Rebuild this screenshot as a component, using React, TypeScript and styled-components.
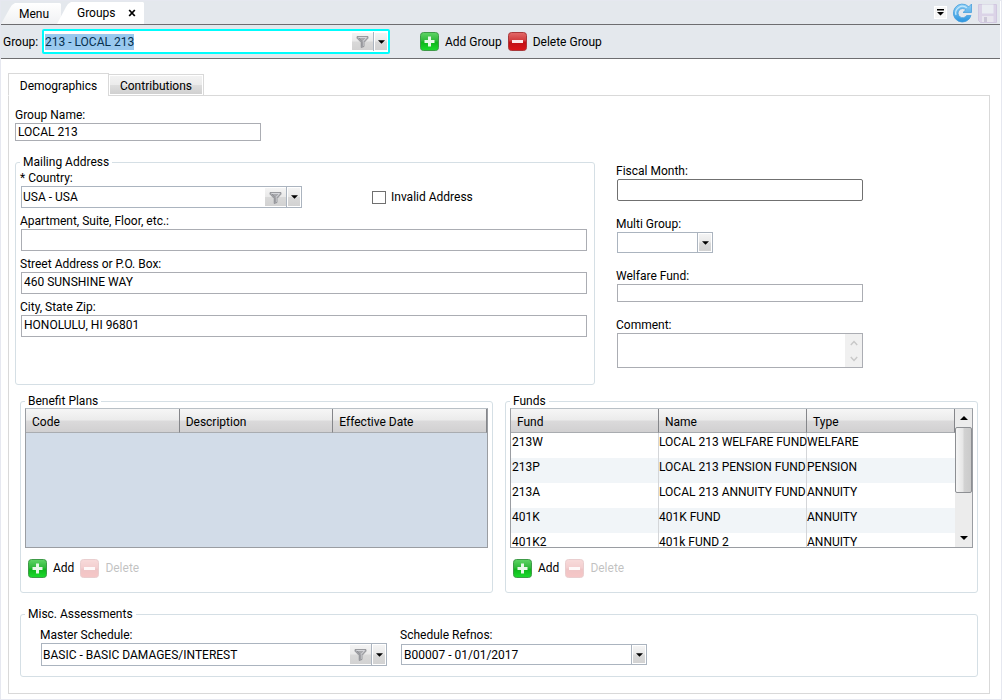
import React, { useEffect, useRef } from "react";
import styled, { createGlobalStyle, css } from "styled-components";

const GlobalStyle = createGlobalStyle`
  * { box-sizing: border-box; }
  body { margin: 0; background: #fff; }
  body, button, input, select, textarea, table {
    font-family: Roboto, "Open Sans", sans-serif;
    font-size: 12px;
    line-height: 16px;
    color: #000;
  }
  button { padding: 0; border: 0; background: none; }
`;

const face = "linear-gradient(#f4f4f4 0%, #e9e9e9 48%, #d9d9d9 52%, #d2d2d2 100%)";

const Window = styled.div`
  min-height: 100vh;
  display: flex;
  flex-direction: column;
  border: 1px solid #e6e8f0;
  padding-right: 1px;
`;

const TitleBar = styled.header`
  display: flex;
  justify-content: space-between;
  height: 24px;
  background: #e4e8ed;
  border-bottom: 1px solid #6d6d70;
`;

const DocTabs = styled.nav`
  display: flex;
  align-items: flex-end;
`;

const DocTab = styled.button<{ $active?: boolean }>`
  display: flex;
  align-items: center;
  justify-content: space-between;
  width: ${(p) => (p.$active ? 87 : 60)}px;
  height: ${(p) => (p.$active ? 22 : 21)}px;
  padding: ${(p) => (p.$active ? "0 8px 0 20px" : "0 11px 0 18px")};
  margin-left: ${(p) => (p.$active ? -4 : 0)}px;
  background: ${(p) => (p.$active ? "#fff" : "linear-gradient(#fff, #f0f1f3)")};
  clip-path: polygon(0 100%, 9px 5px, 11px 2px, 14px 0, calc(100% - 1px) 0, 100% 1px, 100% 100%);
`;

const WindowTools = styled.div`
  display: flex;
  align-items: center;
  gap: 6px;
  padding-right: 3px;
`;

const TabListButton = styled.button`
  display: flex;
  align-items: center;
  justify-content: center;
  width: 13px;
  height: 13px;
  background: #f6f6f6;
  border: 1px solid #fff;
`;

const ToolButton = styled.button`
  display: flex;
  width: 19px;
  height: 20px;
  &:disabled { opacity: 0.8; }
`;

const Toolbar = styled.div`
  display: flex;
  align-items: center;
  height: 34px;
  padding-left: 2px;
  background: #e4e8ed;
  border-bottom: 1px solid #6d6d70;
`;

const ToolbarLabel = styled.label`
  width: 39px;
`;

const ToolbarActions = styled.div`
  display: flex;
  gap: 6px;
  margin-left: 30px;
`;

const IconButton = styled.button`
  display: flex;
  align-items: center;
  gap: 6px;
  height: 20px;
  white-space: nowrap;
  &:disabled { color: #000; opacity: 0.24; }
  svg { flex: none; }
`;

const ComboBox = styled.div<{ $width: number; $height?: number; $focus?: boolean }>`
  display: flex;
  width: ${(p) => p.$width}px;
  max-width: 100%;
  height: ${(p) => p.$height ?? 22}px;
  background: #fff;
  border: 1px solid #abb4bf;
  ${(p) =>
    p.$focus &&
    css`
      border: 2px solid #00fdfd;
      border-radius: 2px;
      padding: 1px 0;
    `}
`;

const ComboText = styled.input`
  flex: 1;
  min-width: 0;
  padding: 0 0 0 1px;
  border: 0;
  outline: 0;
  background: transparent;
  &::selection { background: #99c9ef; color: #06304f; }
`;

const FilterButton = styled.button`
  display: flex;
  align-items: center;
  justify-content: center;
  width: 21px;
  margin: 1px 0;
  background: ${face};
`;

const DropButton = styled.button`
  display: flex;
  align-items: center;
  justify-content: center;
  width: 14px;
  border: 1px solid #fff;
  background: ${face};
  background-clip: padding-box;
  box-shadow: -1px 0 0 #abb4bf;
  margin-left: 1px;
`;

const SelectFrame = styled.div<{ $width: number }>`
  display: flex;
  width: ${(p) => p.$width}px;
  max-width: 100%;
  height: 21px;
  border: 1px solid #abb4bf;
  background: #fff;
  position: relative;
`;

const SelectArrow = styled.span`
  position: absolute;
  top: 0;
  right: 0;
  bottom: 0;
  width: 14px;
  display: flex;
  align-items: center;
  justify-content: center;
  border: 1px solid #fff;
  background: ${face};
  background-clip: padding-box;
  box-shadow: -1px 0 0 #abb4bf;
  pointer-events: none;
`;

const Select = styled.select`
  appearance: none;
  flex: 1;
  min-width: 0;
  padding: 0 18px 0 2px;
  border: 0;
  background: transparent;
`;

const TextBox = styled.input<{ $tall?: boolean; $rounded?: boolean }>`
  width: 100%;
  height: ${(p) => (p.$tall ? 22 : 18)}px;
  padding: ${(p) => (p.$tall ? "0 2px 2px" : "0 2px")};
  background: #fff;
  border: 1px solid ${(p) => (p.$rounded ? "#707070" : "#abadb3")};
  border-radius: ${(p) => (p.$rounded ? 2 : 0)}px;
`;

const Content = styled.main`
  flex: 1;
  display: flex;
  flex-direction: column;
  padding: 14px 10px 5px 7px;
`;

const PageTabs = styled.div`
  display: flex;
  align-items: flex-end;
  height: 23px;
  margin-bottom: -1px;
`;

const PageTab = styled.button<{ $active?: boolean }>`
  position: relative;
  padding-top: 2px;
  border: 1px solid #d9d9d9;
  white-space: nowrap;
  ${(p) =>
    p.$active
      ? css`
          width: 101px;
          height: 23px;
          background: #fff;
          border-bottom-color: #fff;
        `
      : css`
          width: 96px;
          height: 22px;
          margin-left: -1px;
          background: linear-gradient(#f3f3f3, #ebebeb 50%, #dddddd 52%, #cfcfcf);
          box-shadow: inset 0 0 0 1px #fff;
        `}
`;

const TabPanel = styled.section`
  flex: 1;
  border: 1px solid #d9d9d9;
  padding: 11px 11px 15px 6px;
`;

const TopGrid = styled.div`
  display: grid;
  grid-template-columns: minmax(0, 580fr) minmax(0, 362fr);
  gap: 21px;
`;

const Column = styled.div`
  display: flex;
  flex-direction: column;
  gap: 14px;
`;

const SideFields = styled.div`
  display: flex;
  flex-direction: column;
  gap: 15px;
  margin-top: 56px;
  width: 247px;
  max-width: 100%;
`;

const Field = styled.div`
  display: flex;
  flex-direction: column;
  > :not(label) { margin-left: 1px; }
  > input, > textarea { width: calc(100% - 1px); }
`;

const NameField = styled.div`
  display: flex;
  flex-direction: column;
  width: 246px;
`;

const FieldLabel = styled.label`
  height: 16px;
  white-space: nowrap;
`;

const GroupBox = styled.fieldset<{ $pad: string }>`
  min-width: 0;
  margin: 0;
  padding: ${(p) => p.$pad};
  border: 1px solid #d5dfe5;
  border-radius: 3px;
`;

const Legend = styled.legend`
  padding: 0 3px;
  line-height: 14px;
`;

const AddressFields = styled.div`
  display: flex;
  flex-direction: column;
  gap: 5px;
`;

const CountryRow = styled.div`
  display: flex;
  align-items: center;
  gap: 70px;
`;

const CheckLabel = styled.label`
  display: flex;
  align-items: center;
  gap: 5px;
  white-space: nowrap;
`;

const CheckBox = styled.input`
  appearance: none;
  width: 14px;
  height: 13px;
  margin: 0;
  border: 1px solid #707070;
  background: #fff;
  &:checked { background: #4a6f94; }
`;

const CommentFrame = styled.div`
  display: flex;
  height: 35px;
  border: 1px solid #abadb3;
`;

const CommentText = styled.textarea`
  flex: 1;
  min-width: 0;
  padding: 0 2px;
  border: 0;
  resize: none;
  overflow: hidden;
`;

const CommentScroll = styled.div`
  width: 17px;
  display: flex;
  flex-direction: column;
  align-items: center;
  justify-content: space-between;
  padding: 6px 0 5px;
  background: #f0f0f0;
`;

const PairGrid = styled.div`
  display: grid;
  grid-template-columns: repeat(2, minmax(0, 1fr));
  gap: 12px;
  margin: 9px 0 0 5px;
`;

const GridFrame = styled.div<{ $empty?: boolean }>`
  display: flex;
  height: 140px;
  overflow: hidden;
  border: 1px solid #9a9da2;
  border-top-color: #b9c0c6;
  background: ${(p) => (p.$empty ? "#d2dce8" : "#fff")};
`;

const GridBody = styled.div`
  flex: 1;
  min-width: 0;
`;

const DataTable = styled.table`
  width: 100%;
  table-layout: fixed;
  border-collapse: separate;
  border-spacing: 0;
  th {
    height: 24px;
    padding: 2px 0 0 6px;
    text-align: left;
    font-weight: 400;
    background: linear-gradient(#f6f6f6 0%, #ebebeb 48%, #dbdadb 52%, #d1d0d1 100%);
    border-right: 1px solid #85868a;
    border-bottom: 1px solid #a9acb0;
  }
  td {
    height: 25px;
    padding: 1px 0 0;
    vertical-align: top;
    white-space: nowrap;
    border-right: 1px solid #d4d6d9;
  }
  td:first-child { padding-left: 1px; }
  td:last-child { border-right: 0; }
  tbody tr:nth-child(even) { background: #f1f5f8; }
`;

const ScrollTrack = styled.div`
  display: flex;
  flex-direction: column;
  width: 17px;
  background: #ececec;
`;

const ScrollArrow = styled.button`
  display: flex;
  align-items: center;
  justify-content: center;
  height: 18px;
`;

const ScrollThumb = styled.div`
  height: 66px;
  border: 1px solid #8d8f93;
  border-radius: 2px;
  background: linear-gradient(90deg, #f5f5f5, #e6e6e6 45%, #d2d2d2 55%, #cacaca);
`;

const ScrollSpace = styled.div`
  flex: 1;
`;

const GridActions = styled.div`
  display: flex;
  gap: 6px;
  padding: 10px 0 0 3px;
`;

const MiscSection = styled.div`
  margin: 14px 0 0 5px;
`;

const MiscRow = styled.div`
  display: flex;
  gap: 13px;
  padding-left: 15px;
`;

const RefnoField = styled(Field)`
  ${SelectFrame} { margin-top: 1px; }
`;

const Triangle = ({ up, wide }: { up?: boolean; wide?: boolean }) => (
  <svg width={wide ? 8 : 7} height="4" viewBox="0 0 8 4" aria-hidden="true">
    <path d={up ? "M0 4L4 0L8 4Z" : "M0 0H8L4 4Z"} fill="#000" />
  </svg>
);

const Funnel = () => (
  <svg width="13" height="13" viewBox="0 0 13 13" aria-hidden="true">
    <path d="M1 1.5H12V3.2L8 7.5V11.5L5.2 12.5V7.5L1 3.2Z" fill="#a9aaae" stroke="#8c8d92" strokeWidth="0.8" />
    <path d="M2.4 2.5H10.6L7 6.4V11" fill="none" stroke="#d6d7db" strokeWidth="1" />
    <path d="M3 3L6.2 6.8V11" fill="none" stroke="#85868c" strokeWidth="0.8" />
  </svg>
);

const Plus = () => (
  <svg width="19" height="19" viewBox="0 0 19 19" aria-hidden="true">
    <defs>
      <linearGradient id="plusFace" x1="0" y1="0" x2="0" y2="1">
        <stop offset="0" stopColor="#5fd566" />
        <stop offset="0.45" stopColor="#2fb83a" />
        <stop offset="0.55" stopColor="#0fb61c" />
        <stop offset="1" stopColor="#1bdc2c" />
      </linearGradient>
    </defs>
    <rect x="0.5" y="0.5" width="18" height="18" rx="3" fill="url(#plusFace)" stroke="#3f9a48" />
    <path d="M9.5 4.5V14.5M4.5 9.5H14.5" stroke="#e9f8ea" strokeWidth="3" />
  </svg>
);

const Minus = () => (
  <svg width="19" height="19" viewBox="0 0 19 19" aria-hidden="true">
    <defs>
      <linearGradient id="minusFace" x1="0" y1="0" x2="0" y2="1">
        <stop offset="0" stopColor="#e46a6a" />
        <stop offset="0.45" stopColor="#cf3a3c" />
        <stop offset="0.55" stopColor="#c01216" />
        <stop offset="1" stopColor="#dc1518" />
      </linearGradient>
    </defs>
    <rect x="0.5" y="0.5" width="18" height="18" rx="3" fill="url(#minusFace)" stroke="#a8383b" />
    <path d="M4 9.5H15" stroke="#fbeaea" strokeWidth="3" />
  </svg>
);

const Refresh = () => (
  <svg width="19" height="20" viewBox="0 0 19 20" aria-hidden="true">
    <defs>
      <linearGradient id="refreshFace" x1="0" y1="0" x2="0" y2="1">
        <stop offset="0" stopColor="#8fd0f6" />
        <stop offset="1" stopColor="#2b95e0" />
      </linearGradient>
    </defs>
    <path
      d="M18.5 1V9.5H10L12.8 6.8A4.6 4.6 0 1 0 13.6 12.5H18A9 9 0 1 1 15.8 3.8Z"
      fill="url(#refreshFace)"
      stroke="#4a9fdc"
      strokeWidth="0.8"
      strokeLinejoin="round"
    />
    <path d="M3 12A6.8 6.8 0 0 1 13.8 4.8" fill="none" stroke="#c5e8fb" strokeWidth="1.2" />
  </svg>
);

const Save = () => (
  <svg width="19" height="20" viewBox="0 0 19 20" aria-hidden="true">
    <path d="M0.5 1.5H18.5V19.5H2.5L0.5 17.5Z" fill="#d9cfe6" stroke="#cdc1dd" />
    <rect x="4" y="1.5" width="11.5" height="9" fill="#eceff4" />
    <rect x="4" y="13" width="11.5" height="6" fill="#e9e6ef" />
    <rect x="6" y="14" width="3" height="5" fill="#c6c0d2" />
  </svg>
);

const Chevron = ({ up }: { up?: boolean }) => (
  <svg width="8" height="6" viewBox="0 0 8 6" aria-hidden="true">
    <path d={up ? "M0.8 5L4 1.5L7.2 5" : "M0.8 1L4 4.5L7.2 1"} fill="none" stroke="#c8c8c8" strokeWidth="1.4" />
  </svg>
);

interface FilterComboProps {
  id: string;
  value: string;
  width: number;
  height?: number;
  focus?: boolean;
}

function FilterCombo({ id, value, width, height, focus }: FilterComboProps) {
  const ref = useRef<HTMLInputElement>(null);
  useEffect(() => {
    if (focus && ref.current) {
      ref.current.focus();
      ref.current.select();
    }
  }, [focus]);
  return (
    <ComboBox $width={width} $height={height} $focus={focus}>
      <ComboText ref={ref} id={id} role="combobox" aria-expanded="false" defaultValue={value} />
      <FilterButton type="button" aria-label="Filter">
        <Funnel />
      </FilterButton>
      <DropButton type="button" aria-label="Open list">
        <Triangle />
      </DropButton>
    </ComboBox>
  );
}

function DropDown({ id, value, width }: { id: string; value: string; width: number }) {
  return (
    <SelectFrame $width={width}>
      <Select id={id} defaultValue={value}>
        <option value={value}>{value}</option>
      </Select>
      <SelectArrow>
        <Triangle />
      </SelectArrow>
    </SelectFrame>
  );
}

function RowActions() {
  return (
    <GridActions>
      <IconButton type="button">
        <Plus />
        Add
      </IconButton>
      <IconButton type="button" disabled>
        <Minus />
        Delete
      </IconButton>
    </GridActions>
  );
}

const funds = [
  ["213W", "LOCAL 213 WELFARE FUND", "WELFARE"],
  ["213P", "LOCAL 213 PENSION FUND", "PENSION"],
  ["213A", "LOCAL 213 ANNUITY FUND", "ANNUITY"],
  ["401K", "401K FUND", "ANNUITY"],
  ["401K2", "401k FUND 2", "ANNUITY"],
];

function HeaderRow({ names }: { names: string[] }) {
  return (
    <thead>
      <tr>
        {names.map((name) => (
          <th key={name} scope="col">
            {name}
          </th>
        ))}
      </tr>
    </thead>
  );
}

export default function App() {
  return (
    <Window>
      <GlobalStyle />
      <TitleBar>
        <DocTabs>
          <DocTab type="button">Menu</DocTab>
          <DocTab type="button" $active>
            Groups
            <svg width="8" height="8" viewBox="0 0 8 8" aria-hidden="true">
              <path d="M1.2 1L6.8 7M6.8 1L1.2 7" stroke="#000" strokeWidth="1.8" />
            </svg>
          </DocTab>
        </DocTabs>
        <WindowTools>
          <TabListButton type="button" aria-label="Open tabs">
            <svg width="7" height="7" viewBox="0 0 7 7" aria-hidden="true">
              <path d="M0 0H7V1.4H0ZM0 3H7L3.5 6.5Z" fill="#000" />
            </svg>
          </TabListButton>
          <ToolButton type="button" aria-label="Refresh">
            <Refresh />
          </ToolButton>
          <ToolButton type="button" aria-label="Save" disabled>
            <Save />
          </ToolButton>
        </WindowTools>
      </TitleBar>

      <Toolbar>
        <ToolbarLabel htmlFor="group">Group:</ToolbarLabel>
        <FilterCombo id="group" value="213 - LOCAL 213" width={348} height={25} focus />
        <ToolbarActions>
          <IconButton type="button">
            <Plus />
            Add Group
          </IconButton>
          <IconButton type="button">
            <Minus />
            Delete Group
          </IconButton>
        </ToolbarActions>
      </Toolbar>

      <Content>
        <PageTabs role="tablist">
          <PageTab type="button" role="tab" aria-selected="true" $active>
            Demographics
          </PageTab>
          <PageTab type="button" role="tab" aria-selected="false">
            Contributions
          </PageTab>
        </PageTabs>
        <TabPanel role="tabpanel">
          <TopGrid>
            <Column>
              <NameField>
                <FieldLabel htmlFor="name">Group Name:</FieldLabel>
                <TextBox id="name" defaultValue="LOCAL 213" />
              </NameField>
              <GroupBox $pad="1px 7px 47px 4px">
                <Legend>Mailing Address</Legend>
                <AddressFields>
                  <Field>
                    <FieldLabel htmlFor="country">* Country:</FieldLabel>
                    <CountryRow>
                      <FilterCombo id="country" value="USA - USA" width={281} />
                      <CheckLabel>
                        <CheckBox type="checkbox" />
                        Invalid Address
                      </CheckLabel>
                    </CountryRow>
                  </Field>
                  <Field>
                    <FieldLabel htmlFor="apt">Apartment, Suite, Floor, etc.:</FieldLabel>
                    <TextBox id="apt" $tall />
                  </Field>
                  <Field>
                    <FieldLabel htmlFor="street">Street Address or P.O. Box:</FieldLabel>
                    <TextBox id="street" $tall defaultValue="460 SUNSHINE WAY" />
                  </Field>
                  <Field>
                    <FieldLabel htmlFor="city">City, State Zip:</FieldLabel>
                    <TextBox id="city" $tall defaultValue="HONOLULU, HI 96801" />
                  </Field>
                </AddressFields>
              </GroupBox>
            </Column>
            <SideFields>
              <Field>
                <FieldLabel htmlFor="fiscal">Fiscal Month:</FieldLabel>
                <TextBox id="fiscal" $tall $rounded />
              </Field>
              <Field>
                <FieldLabel htmlFor="multi">Multi Group:</FieldLabel>
                <DropDown id="multi" value="" width={96} />
              </Field>
              <Field>
                <FieldLabel htmlFor="welfare">Welfare Fund:</FieldLabel>
                <TextBox id="welfare" />
              </Field>
              <Field>
                <FieldLabel htmlFor="comment">Comment:</FieldLabel>
                <CommentFrame>
                  <CommentText id="comment" />
                  <CommentScroll>
                    <Chevron up />
                    <Chevron />
                  </CommentScroll>
                </CommentFrame>
              </Field>
            </SideFields>
          </TopGrid>

          <PairGrid>
            <GroupBox $pad="0 4px 14px">
              <Legend>Benefit Plans</Legend>
              <GridFrame $empty>
                <GridBody>
                  <DataTable>
                    <HeaderRow names={["Code", "Description", "Effective Date"]} />
                  </DataTable>
                </GridBody>
              </GridFrame>
              <RowActions />
            </GroupBox>
            <GroupBox $pad="0 4px 14px">
              <Legend>Funds</Legend>
              <GridFrame>
                <GridBody>
                  <DataTable>
                    <HeaderRow names={["Fund", "Name", "Type"]} />
                    <tbody>
                      {funds.map((row) => (
                        <tr key={row[0]}>
                          {row.map((cell) => (
                            <td key={cell}>{cell}</td>
                          ))}
                        </tr>
                      ))}
                    </tbody>
                  </DataTable>
                </GridBody>
                <ScrollTrack>
                  <ScrollArrow type="button" aria-label="Scroll up">
                    <Triangle up wide />
                  </ScrollArrow>
                  <ScrollThumb />
                  <ScrollSpace />
                  <ScrollArrow type="button" aria-label="Scroll down">
                    <Triangle wide />
                  </ScrollArrow>
                </ScrollTrack>
              </GridFrame>
              <RowActions />
            </GroupBox>
          </PairGrid>

          <MiscSection>
            <GroupBox $pad="6px 4px 10px">
              <Legend>Misc. Assessments</Legend>
              <MiscRow>
                <Field>
                  <FieldLabel htmlFor="master">Master Schedule:</FieldLabel>
                  <FilterCombo id="master" value="BASIC - BASIC DAMAGES/INTEREST" width={346} height={23} />
                </Field>
                <RefnoField>
                  <FieldLabel htmlFor="refnos">Schedule Refnos:</FieldLabel>
                  <DropDown id="refnos" value="B00007 - 01/01/2017" width={246} />
                </RefnoField>
              </MiscRow>
            </GroupBox>
          </MiscSection>
        </TabPanel>
      </Content>
    </Window>
  );
}
